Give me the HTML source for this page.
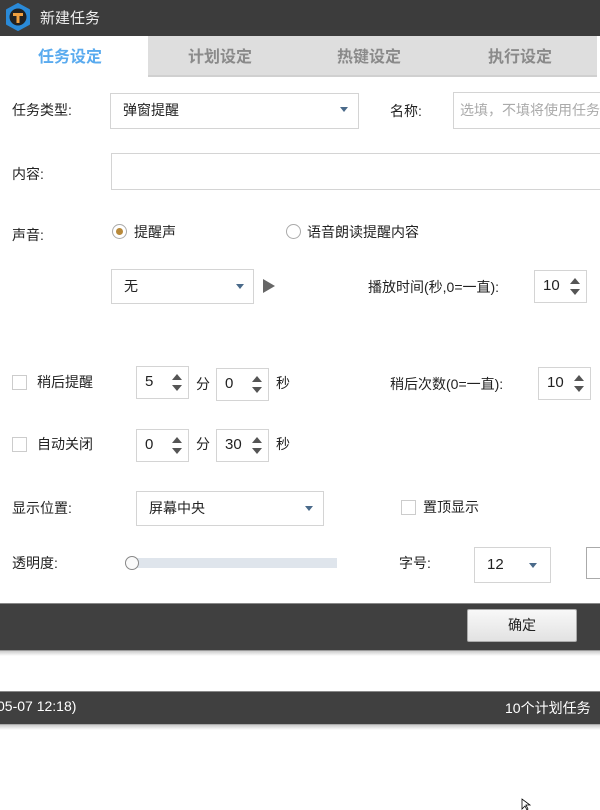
<!DOCTYPE html>
<html><head><meta charset="utf-8"><style>
*{margin:0;padding:0;box-sizing:border-box}
body{width:600px;height:810px;background:#fff;position:relative;overflow:hidden;font-family:"Liberation Sans","Noto Sans CJK SC",sans-serif;font-size:14px;color:#222}
.a{position:absolute;white-space:nowrap}
.lb{position:absolute;line-height:20px;white-space:nowrap}
.box{position:absolute;border:1px solid #d4d4d4;background:#fff}
.arr{position:absolute;width:0;height:0;border-left:4px solid transparent;border-right:4px solid transparent;border-top:5px solid #4a6a8a}
.sp{position:absolute;border:1px solid #d4d4d4;background:#fff;height:33px;width:53px}
.sp span{position:absolute;left:8px;top:6px;font-size:15px}
.sp i{position:absolute;right:6px;width:0;height:0;border-left:5px solid transparent;border-right:5px solid transparent}
.sp i.u{top:7px;border-bottom:6px solid #555}
.sp i.d{bottom:7px;border-top:6px solid #555}
.cb{position:absolute;width:15px;height:15px;border:1px solid #ccc;background:#fff}
</style></head><body>
<div class="a" style="left:0;top:0;width:600px;height:36px;background:#3c3c3c"></div>
<svg class="a" style="left:4px;top:3px" width="28" height="28" viewBox="0 0 28 28"><path d="M14 1 L25 7 L25 21 L14 27 L3 21 L3 7Z" fill="#2a8ad8" stroke="#2a8ad8" stroke-width="2" stroke-linejoin="round"/><circle cx="14" cy="14" r="8.5" fill="#222"/><path d="M9 10h10v3h-3.5v7h-3v-7H9z" fill="#f0a040"/></svg>
<div class="a" style="left:40px;top:7px;color:#eee;font-size:15px">新建任务</div>
<div class="a" style="left:0;top:36px;width:600px;height:41px;background:#dedede;border-bottom:2px solid #d0d0d0"></div>
<div class="a" style="left:0;top:36px;width:148px;height:41px;background:#fff"></div>
<div class="a" style="left:597px;top:36px;width:3px;height:41px;background:#fff"></div>
<div class="a" style="left:38px;top:43px;font-size:16px;font-weight:bold;color:#5aabef">任务设定</div>
<div class="a" style="left:188px;top:43px;font-size:16px;font-weight:bold;color:#8a8a8a">计划设定</div>
<div class="a" style="left:337px;top:43px;font-size:16px;font-weight:bold;color:#8a8a8a">热键设定</div>
<div class="a" style="left:488px;top:43px;font-size:16px;font-weight:bold;color:#8a8a8a">执行设定</div>

<div class="lb" style="left:12px;top:100px">任务类型:</div>
<div class="box" style="left:110px;top:93px;width:249px;height:36px"></div>
<div class="lb" style="left:123px;top:100px">弹窗提醒</div>
<div class="arr" style="left:340px;top:107px"></div>
<div class="lb" style="left:390px;top:101px">名称:</div>
<div class="box" style="left:453px;top:92px;width:160px;height:37px"></div>
<div class="lb" style="left:460px;top:100px;color:#aaa">选填，不填将使用任务</div>

<div class="lb" style="left:12px;top:164px">内容:</div>
<div class="box" style="left:111px;top:153px;width:500px;height:37px"></div>

<div class="lb" style="left:12px;top:225px">声音:</div>
<div class="a" style="left:112px;top:224px;width:15px;height:15px;border-radius:50%;border:1px solid #aaa;background:#fff"></div>
<div class="a" style="left:116px;top:228px;width:7px;height:7px;border-radius:50%;background:#b8893a"></div>
<div class="lb" style="left:134px;top:222px">提醒声</div>
<div class="a" style="left:286px;top:224px;width:15px;height:15px;border-radius:50%;border:1px solid #aaa;background:#fff"></div>
<div class="lb" style="left:307px;top:222px">语音朗读提醒内容</div>

<div class="box" style="left:111px;top:269px;width:143px;height:35px"></div>
<div class="lb" style="left:124px;top:276px">无</div>
<div class="arr" style="left:236px;top:284px"></div>
<div class="a" style="left:263px;top:279px;width:0;height:0;border-top:7px solid transparent;border-bottom:7px solid transparent;border-left:12px solid #666"></div>
<div class="lb" style="left:368px;top:277px">播放时间(秒,0=一直):</div>
<div class="sp" style="left:534px;top:270px"><span>10</span><i class="u"></i><i class="d"></i></div>

<div class="cb" style="left:12px;top:375px"></div>
<div class="lb" style="left:37px;top:372px">稍后提醒</div>
<div class="sp" style="left:136px;top:366px"><span>5</span><i class="u"></i><i class="d"></i></div>
<div class="lb" style="left:196px;top:374px">分</div>
<div class="sp" style="left:216px;top:368px"><span>0</span><i class="u"></i><i class="d"></i></div>
<div class="lb" style="left:276px;top:373px">秒</div>
<div class="lb" style="left:390px;top:374px">稍后次数(0=一直):</div>
<div class="sp" style="left:538px;top:367px"><span>10</span><i class="u"></i><i class="d"></i></div>

<div class="cb" style="left:12px;top:437px"></div>
<div class="lb" style="left:37px;top:434px">自动关闭</div>
<div class="sp" style="left:136px;top:429px"><span>0</span><i class="u"></i><i class="d"></i></div>
<div class="lb" style="left:196px;top:434px">分</div>
<div class="sp" style="left:216px;top:429px"><span>30</span><i class="u"></i><i class="d"></i></div>
<div class="lb" style="left:276px;top:434px">秒</div>

<div class="lb" style="left:12px;top:498px">显示位置:</div>
<div class="box" style="left:136px;top:491px;width:188px;height:35px"></div>
<div class="lb" style="left:149px;top:498px">屏幕中央</div>
<div class="arr" style="left:305px;top:506px"></div>
<div class="cb" style="left:401px;top:500px"></div>
<div class="lb" style="left:423px;top:497px">置顶显示</div>

<div class="lb" style="left:12px;top:553px">透明度:</div>
<div class="a" style="left:133px;top:558px;width:204px;height:10px;background:#dfe5ec"></div>
<div class="a" style="left:125px;top:556px;width:14px;height:14px;border-radius:50%;border:1px solid #888;background:#fafafa"></div>
<div class="lb" style="left:399px;top:553px">字号:</div>
<div class="box" style="left:474px;top:547px;width:77px;height:36px"></div>
<div class="lb" style="left:487px;top:555px;font-size:15px">12</div>
<div class="arr" style="left:529px;top:563px"></div>
<div class="box" style="left:586px;top:547px;width:30px;height:32px;border-color:#aaa"></div>

<div class="a" style="left:0;top:603px;width:600px;height:48px;background:#404040;border-top:1px solid #888;border-bottom:1px solid #999"></div>
<div class="a" style="left:467px;top:609px;width:110px;height:33px;background:linear-gradient(#f8f8f8,#e2e2e2);border:1px solid #aaa;border-radius:2px;text-align:center;line-height:31px">确定</div>
<div class="a" style="left:0;top:651px;width:600px;height:5px;background:linear-gradient(#ccc,#fff)"></div>

<div class="a" style="left:0;top:691px;width:600px;height:34px;background:#404040;border-top:1px solid #888;border-bottom:1px solid #aaa"></div>
<div class="a" style="left:-3px;top:698px;color:#fff;font-size:14px">05-07 12:18)</div>
<div class="a" style="left:505px;top:698px;color:#fff;font-size:14px">10个计划任务</div>
<div class="a" style="left:0;top:725px;width:600px;height:5px;background:linear-gradient(#ccc,#fff)"></div>
<svg class="a" style="left:521px;top:798px" width="10" height="12"><path d="M1 1v10l3-3 2 4 1-1-2-4h4z" fill="#fff" stroke="#000" stroke-width="0.8"/></svg>
</body></html>
